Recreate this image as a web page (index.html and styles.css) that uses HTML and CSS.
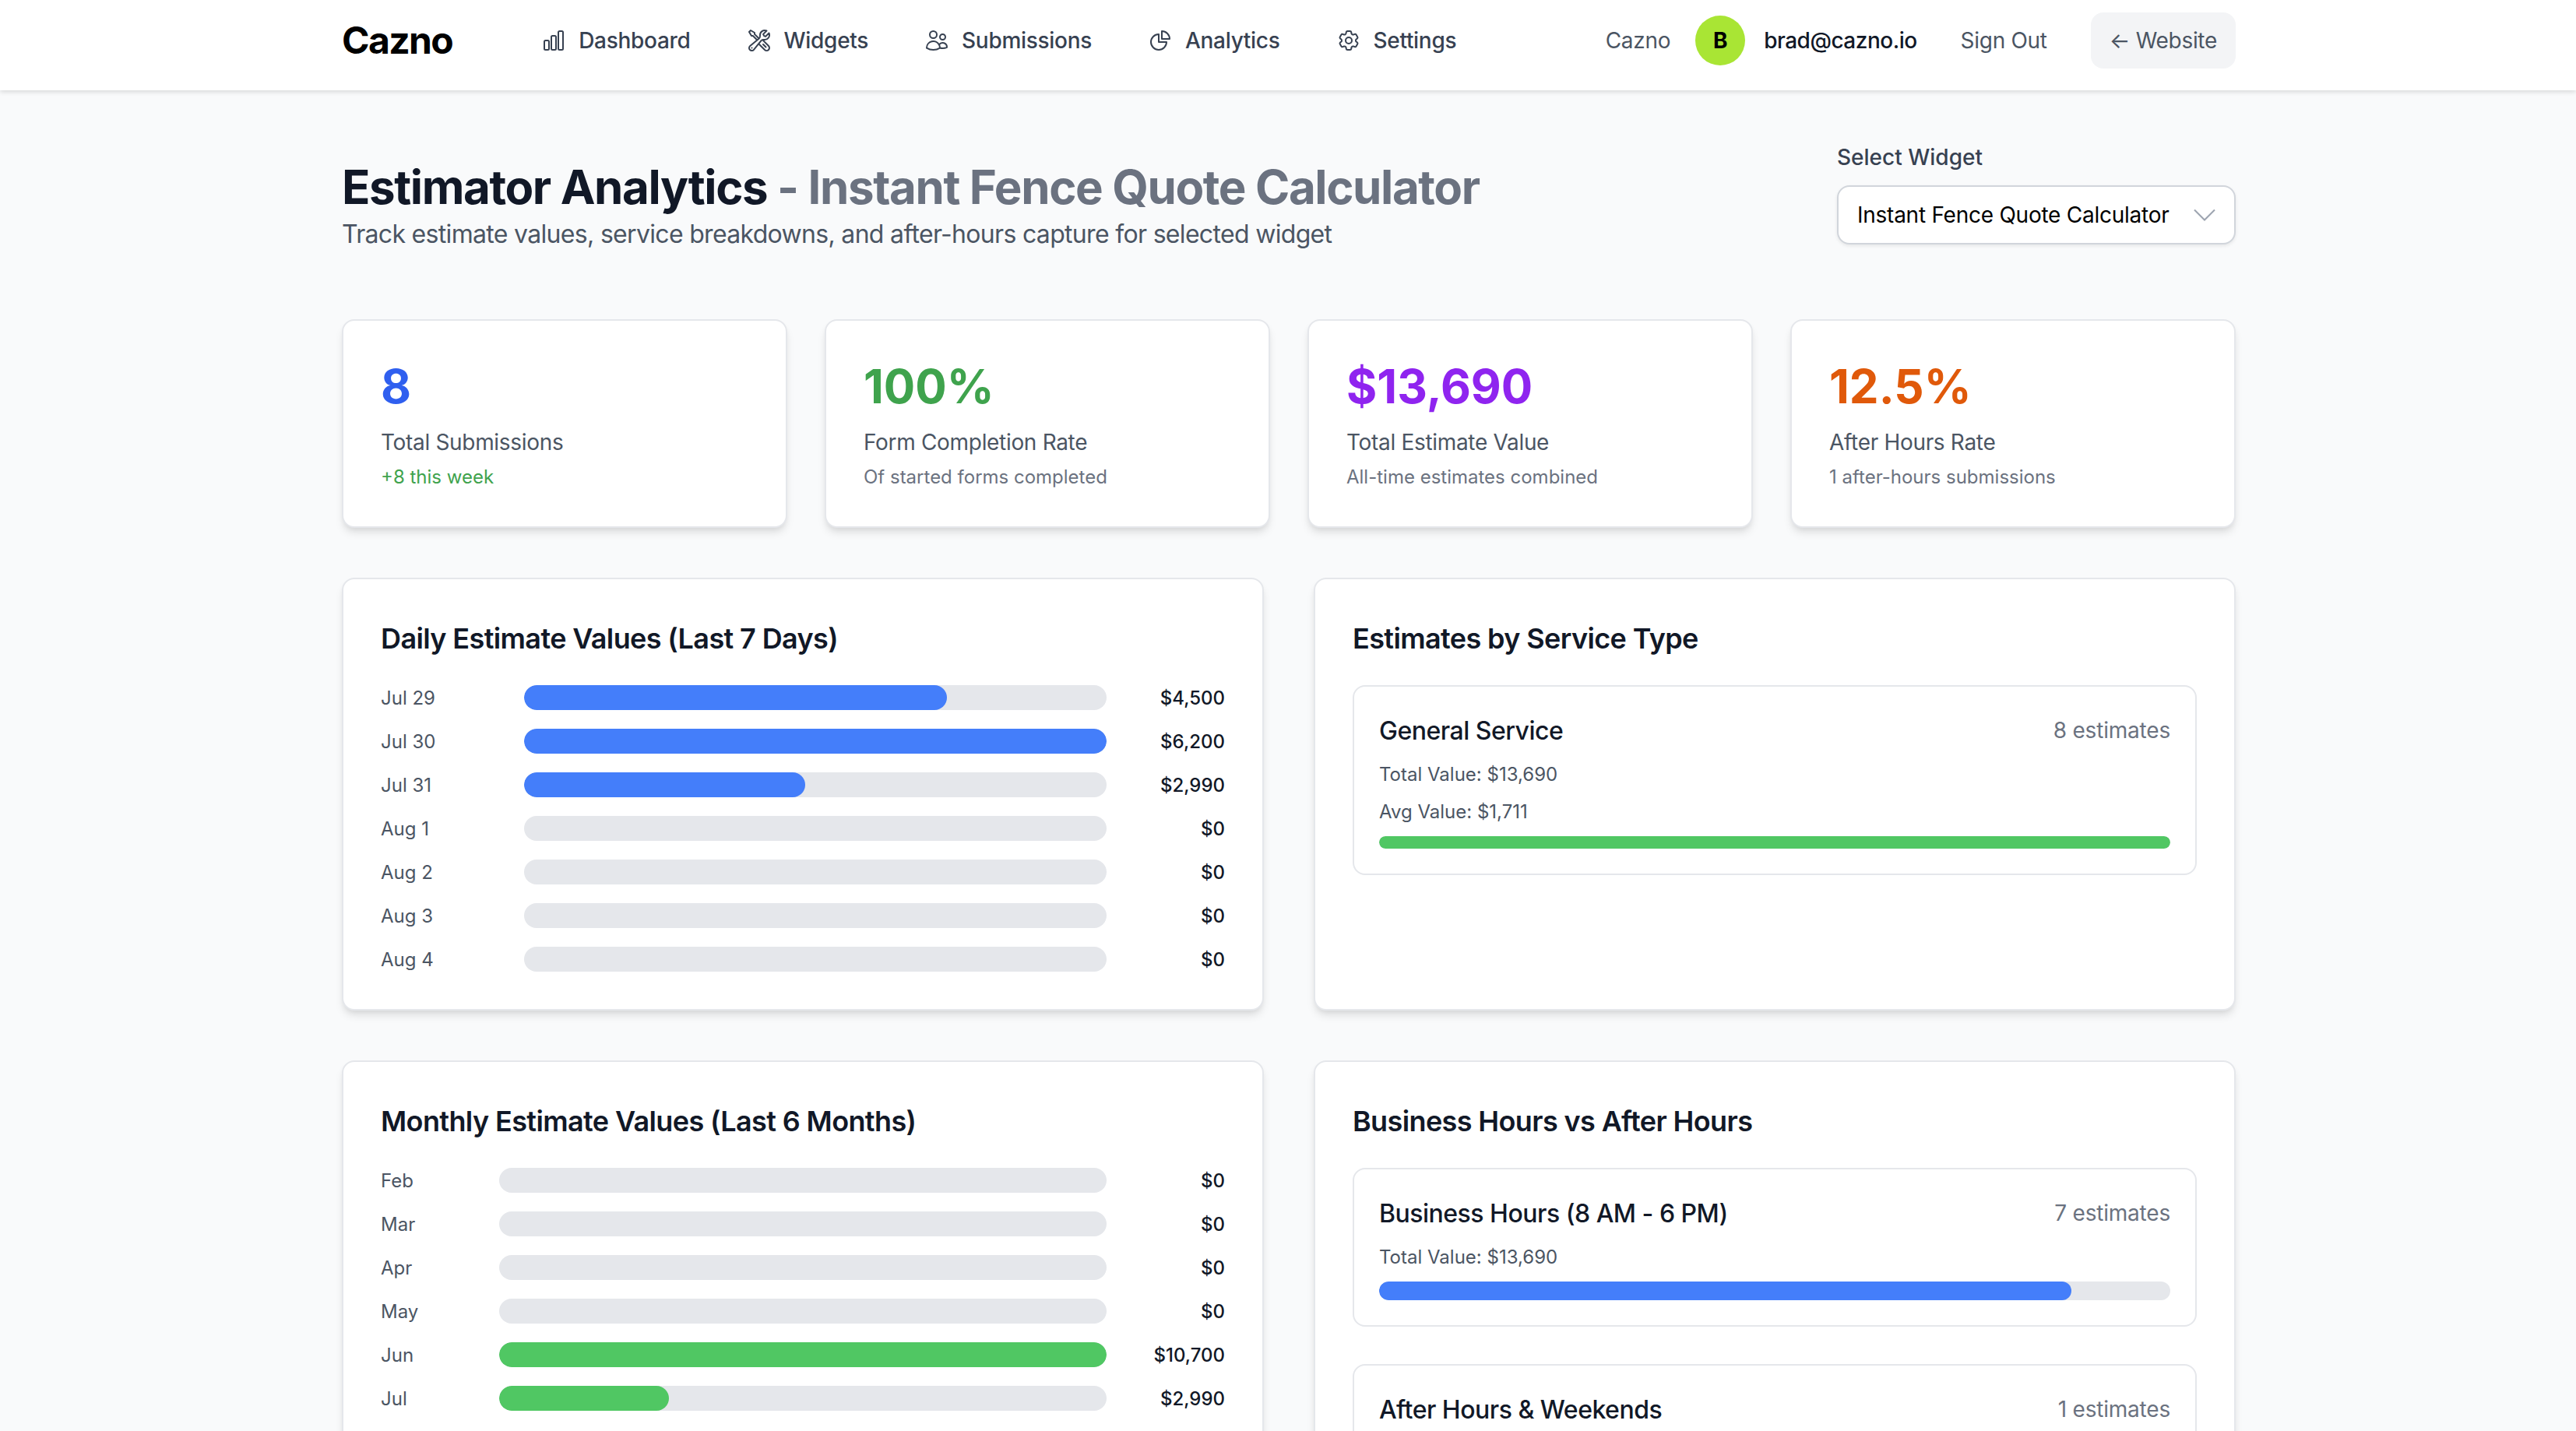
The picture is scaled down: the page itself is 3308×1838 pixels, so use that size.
FILE: index.html
```html
<!DOCTYPE html>
<html lang="en">
<head>
<meta charset="utf-8">
<title>Estimator Analytics - Cazno</title>
<link rel="stylesheet" href="styles.css">
</head>
<body>
<header class="topbar">
  <div class="wrap topbar-inner">
    <div class="brand">Cazno</div>
    <nav class="nav">
      <a class="nav-link"><svg class="nav-icon" viewBox="0 0 24 24"><path d="M3 13.125C3 12.504 3.504 12 4.125 12h2.25c.621 0 1.125.504 1.125 1.125v6.75C7.5 20.496 6.996 21 6.375 21h-2.25A1.125 1.125 0 0 1 3 19.875v-6.75ZM9.75 8.625c0-.621.504-1.125 1.125-1.125h2.25c.621 0 1.125.504 1.125 1.125v11.25c0 .621-.504 1.125-1.125 1.125h-2.25a1.125 1.125 0 0 1-1.125-1.125V8.625ZM16.5 4.125c0-.621.504-1.125 1.125-1.125h2.25C20.496 3 21 3.504 21 4.125v15.75c0 .621-.504 1.125-1.125 1.125h-2.25a1.125 1.125 0 0 1-1.125-1.125V4.125Z"/></svg>Dashboard</a>
      <a class="nav-link"><svg class="nav-icon" viewBox="0 0 24 24"><path d="M11.42 15.17 17.25 21A2.652 2.652 0 0 0 21 17.25l-5.877-5.877M11.42 15.17l2.496-3.03c.317-.384.74-.626 1.208-.766M11.42 15.17l-4.655 5.653a2.548 2.548 0 1 1-3.586-3.586l6.837-5.63m5.108-.233c.55-.164 1.163-.188 1.743-.14a4.5 4.5 0 0 0 4.486-6.336l-3.276 3.277a3.004 3.004 0 0 1-2.25-2.25l3.276-3.276a4.5 4.5 0 0 0-6.336 4.486c.091 1.076-.071 2.264-.904 2.95l-.102.085m-1.745 1.437L5.909 7.5H4.5L2.25 3.75l1.5-1.5L7.5 4.5v1.409l4.26 4.26m-1.745 1.437 1.745-1.437m6.615 8.206L15.75 15.75M4.867 19.125h.008v.008h-.008v-.008Z"/></svg>Widgets</a>
      <a class="nav-link"><svg class="nav-icon" viewBox="0 0 24 24"><path d="M15 19.128a9.38 9.38 0 0 0 2.625.372 9.337 9.337 0 0 0 4.121-.952 4.125 4.125 0 0 0-7.533-2.493M15 19.128v-.003c0-1.113-.285-2.16-.786-3.07M15 19.128v.106A12.318 12.318 0 0 1 8.624 21c-2.331 0-4.512-.645-6.374-1.766l-.001-.109a6.375 6.375 0 0 1 11.964-3.07M12 6.375a3.375 3.375 0 1 1-6.75 0 3.375 3.375 0 0 1 6.75 0Zm8.25 2.25a2.625 2.625 0 1 1-5.25 0 2.625 2.625 0 0 1 5.25 0Z"/></svg>Submissions</a>
      <a class="nav-link"><svg class="nav-icon" viewBox="0 0 24 24"><path d="M10.5 6a7.5 7.5 0 1 0 7.5 7.5h-7.5V6Z"/><path d="M13.5 10.5H21A7.5 7.5 0 0 0 13.5 3v7.5Z"/></svg>Analytics</a>
      <a class="nav-link"><svg class="nav-icon" viewBox="0 0 24 24"><path d="M9.594 3.94c.09-.542.56-.94 1.11-.94h2.593c.55 0 1.02.398 1.11.94l.213 1.281c.063.374.313.686.645.87.074.04.147.083.22.127.325.196.72.257 1.075.124l1.217-.456a1.125 1.125 0 0 1 1.37.49l1.296 2.247a1.125 1.125 0 0 1-.26 1.431l-1.003.827c-.293.241-.438.613-.43.992a7.723 7.723 0 0 1 0 .255c-.008.378.137.75.43.991l1.004.827c.424.35.534.955.26 1.43l-1.298 2.247a1.125 1.125 0 0 1-1.369.491l-1.217-.456c-.355-.133-.75-.072-1.076.124a6.47 6.47 0 0 1-.22.128c-.331.183-.581.495-.644.869l-.213 1.281c-.09.543-.56.94-1.11.94h-2.594c-.55 0-1.019-.398-1.11-.94l-.213-1.281c-.062-.374-.312-.686-.644-.87a6.52 6.52 0 0 1-.22-.127c-.325-.196-.72-.257-1.076-.124l-1.217.456a1.125 1.125 0 0 1-1.369-.49l-1.297-2.247a1.125 1.125 0 0 1 .26-1.431l1.004-.827c.292-.24.437-.613.43-.991a6.932 6.932 0 0 1 0-.255c.007-.38-.138-.751-.43-.992l-1.004-.827a1.125 1.125 0 0 1-.26-1.43l1.297-2.247a1.125 1.125 0 0 1 1.37-.491l1.216.456c.356.133.751.072 1.076-.124.072-.044.146-.086.22-.128.332-.183.582-.495.644-.869l.214-1.28Z"/><path d="M15 12a3 3 0 1 1-6 0 3 3 0 0 1 6 0Z"/></svg>Settings</a>
    </nav>
    <div class="account">
      <span class="org">Cazno</span>
      <span class="avatar">B</span>
      <span class="email">brad@cazno.io</span>
      <a class="signout">Sign Out</a>
      <a class="website">← Website</a>
    </div>
  </div>
</header>

<main class="wrap page">
  <section class="page-head">
    <div class="page-titles">
      <h1 class="page-title">Estimator Analytics <span class="page-title-sub">- Instant Fence Quote Calculator</span></h1>
      <p class="page-desc">Track estimate values, service breakdowns, and after-hours capture for selected widget</p>
    </div>
    <div class="picker">
      <div class="picker-label">Select Widget</div>
      <div class="picker-box">
        <span>Instant Fence Quote Calculator</span>
        <svg class="picker-chevron" viewBox="0 0 28 16"><path d="M1 1.5 14 14.5 27 1.5"/></svg>
      </div>
    </div>
  </section>

  <section class="stats">
    <div class="card stat"><div class="stat-value blue">8</div><div class="stat-label">Total Submissions</div><div class="stat-note green">+8 this week</div></div>
    <div class="card stat"><div class="stat-value green">100%</div><div class="stat-label">Form Completion Rate</div><div class="stat-note">Of started forms completed</div></div>
    <div class="card stat"><div class="stat-value purple">$13,690</div><div class="stat-label">Total Estimate Value</div><div class="stat-note">All-time estimates combined</div></div>
    <div class="card stat"><div class="stat-value orange">12.5%</div><div class="stat-label">After Hours Rate</div><div class="stat-note">1 after-hours submissions</div></div>
  </section>

  <section class="charts">
    <div class="card panel">
      <h2 class="panel-title">Daily Estimate Values (Last 7 Days)</h2>
      <div class="rows rows-daily">
        <div class="row"><span class="row-label">Jul 29</span><div class="track"><div class="fill fill-blue" style="width:72.6%"></div></div><span class="row-value">$4,500</span></div>
        <div class="row"><span class="row-label">Jul 30</span><div class="track"><div class="fill fill-blue" style="width:100%"></div></div><span class="row-value">$6,200</span></div>
        <div class="row"><span class="row-label">Jul 31</span><div class="track"><div class="fill fill-blue" style="width:48.2%"></div></div><span class="row-value">$2,990</span></div>
        <div class="row"><span class="row-label">Aug 1</span><div class="track"></div><span class="row-value">$0</span></div>
        <div class="row"><span class="row-label">Aug 2</span><div class="track"></div><span class="row-value">$0</span></div>
        <div class="row"><span class="row-label">Aug 3</span><div class="track"></div><span class="row-value">$0</span></div>
        <div class="row"><span class="row-label">Aug 4</span><div class="track"></div><span class="row-value">$0</span></div>
      </div>
    </div>

    <div class="card panel">
      <h2 class="panel-title">Estimates by Service Type</h2>
      <div class="item">
        <div class="item-head"><span class="item-title">General Service</span><span class="item-count">8 estimates</span></div>
        <div class="item-line">Total Value: $13,690</div>
        <div class="item-line">Avg Value: $1,711</div>
        <div class="track track-thin"><div class="fill fill-green" style="width:100%"></div></div>
      </div>
    </div>

    <div class="card panel">
      <h2 class="panel-title">Monthly Estimate Values (Last 6 Months)</h2>
      <div class="rows rows-monthly">
        <div class="row"><span class="row-label">Feb</span><div class="track"></div><span class="row-value">$0</span></div>
        <div class="row"><span class="row-label">Mar</span><div class="track"></div><span class="row-value">$0</span></div>
        <div class="row"><span class="row-label">Apr</span><div class="track"></div><span class="row-value">$0</span></div>
        <div class="row"><span class="row-label">May</span><div class="track"></div><span class="row-value">$0</span></div>
        <div class="row"><span class="row-label">Jun</span><div class="track"><div class="fill fill-green" style="width:100%"></div></div><span class="row-value">$10,700</span></div>
        <div class="row"><span class="row-label">Jul</span><div class="track"><div class="fill fill-green" style="width:27.9%"></div></div><span class="row-value">$2,990</span></div>
      </div>
    </div>

    <div class="card panel">
      <h2 class="panel-title">Business Hours vs After Hours</h2>
      <div class="item">
        <div class="item-head"><span class="item-title">Business Hours (8 AM - 6 PM)</span><span class="item-count">7 estimates</span></div>
        <div class="item-line">Total Value: $13,690</div>
        <div class="track track-mid"><div class="fill fill-blue" style="width:87.5%"></div></div>
      </div>
      <div class="item">
        <div class="item-head"><span class="item-title">After Hours &amp; Weekends</span><span class="item-count">1 estimates</span></div>
      </div>
    </div>
  </section>
</main>
</body>
</html>
```
FILE: styles.css
```css
html, body {
  margin: 0;
  height: 1838px;
  overflow: hidden;
}
body {
  background: #f9fafb;
  color: #111827;
  font-family: Inter, "Liberation Sans", sans-serif;
  font-size: 28px;
  line-height: 40px;
}
h1, h2, p { margin: 0; }

.wrap {
  width: 2432px;
  margin-left: 439px;
}

/* Top bar */
.topbar {
  height: 116px;
  box-sizing: border-box;
  background: #fff;
  padding-top: 16px;
  box-shadow: 0 2px 6px rgba(0, 0, 0, .14);
  position: relative;
}
.topbar-inner {
  display: flex;
  align-items: center;
  height: 72px;
}
.brand {
  font-size: 48px;
  font-weight: 700;
  line-height: 56px;
  color: #000;
  letter-spacing: -1.6px;
  margin-right: 114px;
}
.nav {
  display: flex;
  gap: 72px;
}
.nav-link {
  display: flex;
  align-items: center;
  gap: 16px;
  color: #374151;
  font-weight: 500;
  letter-spacing: -.3px;
}
.nav-icon {
  width: 32px;
  height: 32px;
  fill: none;
  stroke: currentColor;
  stroke-width: 1.5;
  stroke-linecap: round;
  stroke-linejoin: round;
}
.account {
  margin-left: auto;
  display: flex;
  align-items: center;
  letter-spacing: -.3px;
}
.org { color: #4b5563; font-weight: 400; margin-right: 32px; }
.avatar {
  width: 64px;
  height: 64px;
  border-radius: 50%;
  background: #a9e534;
  color: #000;
  font-weight: 700;
  display: flex;
  align-items: center;
  justify-content: center;
  margin-right: 24px;
}
.email { color: #111827; font-weight: 500; margin-right: 56px; letter-spacing: -.5px; }
.signout { color: #4b5563; font-weight: 400; margin-right: 56px; }
.website {
  background: #f3f4f6;
  color: #4b5563;
  font-weight: 400;
  padding: 16px 24px;
  border-radius: 16px;
}

/* Page head */
.page { padding-top: 64px; }
.page-head {
  display: flex;
  justify-content: space-between;
  align-items: flex-start;
  height: 144px;
  margin-bottom: 86px;
}
.page-titles { padding-top: 24px; }
.page-title {
  font-size: 60px;
  line-height: 72px;
  font-weight: 700;
  color: #111827;
  letter-spacing: -1.4px;
}
.page-title-sub { color: #6b7280; }
.page-desc {
  font-size: 32px;
  line-height: 48px;
  padding-top: 1px;
  color: #4b5563;
  letter-spacing: -.68px;
}
.picker { width: 512px; padding-top: 2px; }
.picker-label {
  font-weight: 500;
  color: #374151;
  margin-bottom: 16px;
}
.picker-box {
  height: 76px;
  box-sizing: border-box;
  padding: 0 24px;
  display: flex;
  align-items: center;
  justify-content: space-between;
  background: #fff;
  border: 2px solid #d1d5db;
  border-radius: 16px;
  box-shadow: 0 2px 4px rgba(0, 0, 0, .08);
  color: #000;
  letter-spacing: -.25px;
}
.picker-chevron {
  width: 28px;
  height: 16px;
  fill: none;
  stroke: #9ca3af;
  stroke-width: 2;
}

/* Cards */
.card {
  background: #fff;
  border: 2px solid #e5e7eb;
  border-radius: 16px;
  box-shadow: 0 8px 12px -2px rgba(0, 0, 0, .1), 0 4px 8px -4px rgba(0, 0, 0, .1);
  box-sizing: border-box;
}
.stats {
  display: grid;
  grid-template-columns: repeat(4, 1fr);
  gap: 48px;
  margin-bottom: 64px;
}
.stat { padding: 48px; }
.stat-value {
  font-size: 60px;
  line-height: 72px;
  font-weight: 700;
  margin-bottom: 16px;
}
.stat-label { color: #4b5563; font-weight: 400; margin-bottom: 8px; letter-spacing: -.32px; }
.stat-note { font-size: 24px; line-height: 32px; height: 32px; box-sizing: border-box; padding-top: 1px; color: #6b7280; }
.blue { color: #2f5fef; }
.green { color: #3fa34d; }
.purple { color: #8f24ef; }
.orange { color: #e0590a; }

/* Chart panels */
.charts {
  display: grid;
  grid-template-columns: repeat(2, 1fr);
  gap: 64px;
}
.panel { padding: 48px; }
.panel-title {
  font-size: 36px;
  line-height: 56px;
  font-weight: 600;
  color: #111827;
  margin-bottom: 32px;
  letter-spacing: -.62px;
}
.rows {
  display: flex;
  flex-direction: column;
  gap: 24px;
}
.row {
  display: flex;
  align-items: center;
  gap: 24px;
  height: 32px;
  font-size: 24px;
  line-height: 32px;
}
.row-label { color: #4b5563; flex: none; padding-top: 2px; }
.rows-daily .row-label { width: 160px; }
.rows-monthly .row-label { width: 128px; }
.row-value {
  width: 128px;
  flex: none;
  text-align: right;
  color: #111827;
  font-weight: 500;
  padding-top: 2px;
}
.track {
  flex: 1;
  height: 32px;
  background: #e5e7eb;
  border-radius: 16px;
  overflow: hidden;
}
.fill { height: 100%; border-radius: inherit; }
.fill-blue { background: #447efa; }
.fill-green { background: #50c763; }
.track-thin { height: 16px; border-radius: 8px; margin-top: 16px; }
.track-mid { height: 24px; border-radius: 12px; margin-top: 16px; }

.item {
  border: 2px solid #e5e7eb;
  border-radius: 16px;
  padding: 32px;
}
.item + .item { margin-top: 48px; }
.item-head {
  display: flex;
  justify-content: space-between;
  align-items: center;
  margin-bottom: 16px;
}
.item-title { font-size: 32px; line-height: 48px; height: 48px; box-sizing: border-box; padding-top: 1px; font-weight: 500; color: #111827; letter-spacing: -.5px; }
.item-count { color: #6b7280; letter-spacing: -.2px; }
.item-line { font-size: 24px; line-height: 32px; height: 32px; box-sizing: border-box; padding-top: 1px; color: #4b5563; }
.item-line + .item-line { margin-top: 16px; }
```
